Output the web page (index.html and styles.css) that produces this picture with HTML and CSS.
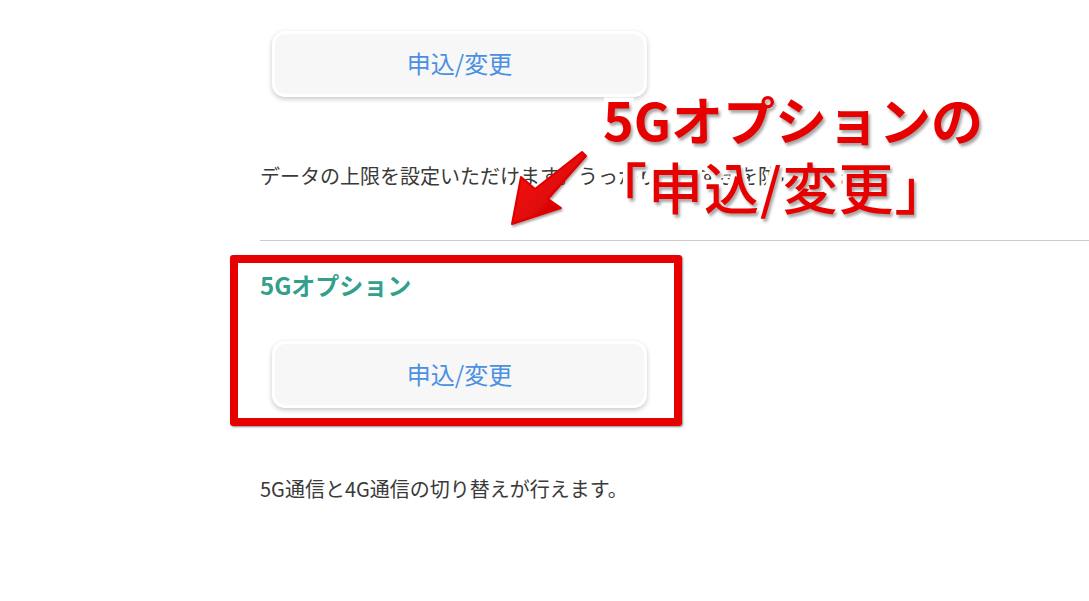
FILE: index.html
```html
<!DOCTYPE html>
<html lang="ja">
<head>
<meta charset="utf-8">
<title>5Gオプション</title>
<link rel="stylesheet" href="styles.css">
</head>
<body>
<main class="page">
  <section class="item">
    <a class="btn" href="#">申込/変更</a>
    <p class="desc first">データの上限を設定いただけます。うっかり使いすぎを防止できます。</p>
  </section>
  <hr class="sep">
  <section class="item">
    <h3 class="title">5Gオプション</h3>
    <a class="btn second" href="#">申込/変更</a>
    <p class="desc last">5G通信と4G通信の切り替えが行えます。</p>
  </section>
</main>

<div class="highlight"></div>

<svg class="arrow" width="1089" height="601" viewBox="0 0 1089 601" aria-hidden="true">
  <defs>
    <linearGradient id="ag" x1="0" y1="0" x2="1" y2="1">
      <stop offset="0" stop-color="#ff1010"/>
      <stop offset="1" stop-color="#c80000"/>
    </linearGradient>
    <filter id="sh" x="-20%" y="-20%" width="140%" height="140%">
      <feDropShadow dx="1" dy="2" stdDeviation="1.2" flood-color="#000" flood-opacity="0.35"/>
    </filter>
  </defs>
  <path filter="url(#sh)" fill="url(#ag)" stroke="#e00000" stroke-width="2" stroke-linejoin="round"
        d="M512 224 L521 177 L535 189 L582 152 L586 156 L548 199 L561 208 Z"/>
</svg>

<div class="callout">
  <div class="callout-line one">5Gオプションの</div>
  <div class="callout-line two">「申込/変更」</div>
</div>
</body>
</html>
```

FILE: styles.css
```css
html, body {
  margin: 0;
  padding: 0;
  background: #ffffff;
}

body {
  width: 1089px;
  height: 601px;
  overflow: hidden;
  position: relative;
  font-family: "Noto Sans CJK JP", "Noto Sans", sans-serif;
  color: #333333;
}

.page {
  padding: 31px 0 0 260px;
  display: flex;
  flex-direction: column;
}

.item {
  display: flex;
  flex-direction: column;
  align-items: flex-start;
}

.btn {
  box-sizing: border-box;
  margin-left: 12px;
  width: 375px;
  height: 66px;
  padding-bottom: 3px;
  display: flex;
  align-items: center;
  justify-content: center;
  background: #f7f7f7;
  border: 3px solid #ffffff;
  border-radius: 13px;
  box-shadow: 0 2px 5px rgba(0, 0, 0, 0.22);
  color: #4a90e2;
  font-size: 24px;
  text-decoration: none;
  letter-spacing: 0;
}

.btn.second {
  margin-top: 41px;
  height: 67px;
}

.desc {
  margin: 0;
  font-size: 20px;
  line-height: 30px;
  color: #3a3a3a;
  white-space: nowrap;
}

.desc.first {
  margin-top: 64px;
}

.desc.last {
  margin-top: 66px;
}

.sep {
  margin: 49px 0 0 0;
  border: 0;
  height: 1px;
  background: #cccccc;
}

.title {
  margin: 29px 0 0 0;
  font-size: 24px;
  line-height: 30px;
  font-weight: 700;
  color: #32a08a;
}

/* annotation overlays */
.highlight {
  position: absolute;
  left: 230px;
  top: 255px;
  width: 452px;
  height: 171px;
  box-sizing: border-box;
  border: 8px solid #e60000;
  border-radius: 3px;
  box-shadow: 1px 1px 2px rgba(0, 0, 0, 0.45);
}

.arrow {
  position: absolute;
  left: 0;
  top: 0;
  pointer-events: none;
}

.callout {
  position: absolute;
  left: 598px;
  top: 87px;
  display: flex;
  flex-direction: column;
  font-family: "Noto Sans CJK JP", sans-serif;
  font-weight: 700;
  color: #e60000;
}

.callout-line {
  font-size: 52px;
  line-height: 64px;
  white-space: nowrap;
  -webkit-text-stroke: 9px #ffffff;
  paint-order: stroke fill;
  text-shadow: 2px 3px 3px rgba(0, 0, 0, 0.35);
}

.callout-line.one {
  margin-left: 5px;
}

.callout-line.two {
  margin-left: -6px;
  margin-top: 2px;
  font-size: 55px;
  font-weight: 500;
  letter-spacing: 1px;
}
```
